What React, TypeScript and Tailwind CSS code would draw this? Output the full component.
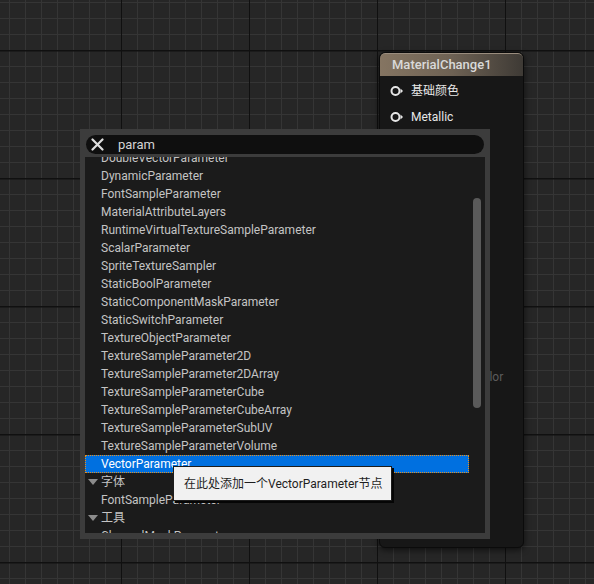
import React from "react";

const items = [
  "DoubleVectorParameter",
  "DynamicParameter",
  "FontSampleParameter",
  "MaterialAttributeLayers",
  "RuntimeVirtualTextureSampleParameter",
  "ScalarParameter",
  "SpriteTextureSampler",
  "StaticBoolParameter",
  "StaticComponentMaskParameter",
  "StaticSwitchParameter",
  "TextureObjectParameter",
  "TextureSampleParameter2D",
  "TextureSampleParameter2DArray",
  "TextureSampleParameterCube",
  "TextureSampleParameterCubeArray",
  "TextureSampleParameterSubUV",
  "TextureSampleParameterVolume",
];

const pins = [
  { label: "基础颜色", on: true },
  { label: "Metallic", on: true },
  { label: "Specular", on: false },
  { label: "Roughness", on: false },
  { label: "Anisotropy", on: false },
  { label: "Emissive", on: false },
  { label: "Opacity", on: false },
  { label: "Opacity Mask", on: false },
  { label: "Normal", on: false },
  { label: "Tangent", on: false },
  { label: "世界位置偏移", on: false },
  { label: "Subsurface Color", on: false },
];

function PinIcon({ on }: { on: boolean }) {
  const c = on ? "#e6e6e6" : "#5a5a5a";
  return (
    <svg width="14" height="12" viewBox="0 0 14 12">
      <circle cx="5.5" cy="6" r="4" fill="none" stroke={c} strokeWidth="2" />
      <polygon points="10.5,3.5 13,6 10.5,8.5" fill={c} />
    </svg>
  );
}

function Arrow() {
  return (
    <svg width="10" height="7" viewBox="0 0 10 7">
      <polygon points="0,0 10,0 5,6" fill="#8c8c8c" />
    </svg>
  );
}

export default function App() {
  return (
    <div className="relative w-[594px] h-[584px] overflow-hidden bg-[#262626] font-['Roboto','Noto_Sans_CJK_SC',sans-serif]">
      <svg className="absolute inset-0" width="594" height="584">
        <defs>
          <pattern id="minor" x="9" y="2" width="16" height="16" patternUnits="userSpaceOnUse">
            <rect x="0" y="0" width="1" height="16" fill="#353535" />
            <rect x="0" y="0" width="16" height="1" fill="#353535" />
          </pattern>
          <pattern id="major" x="121" y="50" width="128" height="128" patternUnits="userSpaceOnUse">
            <rect x="0" y="0" width="1" height="128" fill="#101010" />
            <rect x="0" y="0" width="128" height="1.5" fill="#101010" />
          </pattern>
        </defs>
        <rect width="594" height="584" fill="url(#minor)" />
        <rect width="594" height="584" fill="url(#major)" />
      </svg>

      {/* Material node */}
      <div className="absolute left-[379px] top-[52px] w-[145px] h-[496px] rounded-[6px] bg-[#171717] border border-[#0b0b0b] shadow-[0_2px_6px_rgba(0,0,0,0.6)] overflow-hidden flex flex-col">
        <div className="h-[23px] shrink-0 flex items-center pl-[12px] rounded-t-[5px] bg-[linear-gradient(to_right,#857562,#6e6254_50%,#3e3a35)] border-t border-[#9a8d7e] text-[13px] font-medium text-[#d9d9d9]">
          MaterialChange1
        </div>
        <div className="flex flex-col pt-[2px]">
          {pins.map((p) => (
            <div key={p.label} className="h-[26px] flex items-center pl-[10px] gap-[7px]">
              <PinIcon on={p.on} />
              <span className={p.on ? "text-[12px] text-[#e8e8e8] whitespace-nowrap" : "text-[12px] text-[#5c5c5c] whitespace-nowrap"}>
                {p.label}
              </span>
            </div>
          ))}
        </div>
      </div>

      {/* Context menu */}
      <div className="absolute left-[80px] top-[129px] w-[410px] h-[410px] bg-[#3c3c3c] px-[5px] pt-[6px] pb-[6px] flex flex-col">
        <div className="h-[19px] mx-[1px] rounded-full bg-[#0f0f0f] flex items-center pl-[5px] shrink-0">
          <svg width="13" height="13" viewBox="0 0 13 13">
            <path d="M1.5 1.5 L11.5 11.5 M11.5 1.5 L1.5 11.5" stroke="#dedede" strokeWidth="2.2" strokeLinecap="round" />
          </svg>
          <span className="ml-[14px] text-[13px] text-[#d4d4d4]">param</span>
        </div>
        <div className="mt-[3px] flex-1 bg-[#1b1b1b] flex overflow-hidden">
          <div className="w-[384px] overflow-hidden">
            <div className="mt-[-8px] flex flex-col">
              {items.map((t) => (
                <div key={t} className="h-[18px] flex items-center pl-[16px] text-[12px] text-[#c4c4c4] whitespace-nowrap">
                  {t}
                </div>
              ))}
              <div className="h-[18px] flex items-center pl-[16px] text-[12px] text-white bg-[#0070e0] outline outline-1 outline-dotted outline-[#e8901c] -outline-offset-1">
                VectorParameter
              </div>
              <div className="h-[18px] flex items-center pl-[3px] gap-[3px] text-[12px] text-[#c4c4c4]">
                <Arrow />
                <span>字体</span>
              </div>
              <div className="h-[18px] flex items-center pl-[16px] text-[12px] text-[#c4c4c4]">FontSampleParameter</div>
              <div className="h-[18px] flex items-center pl-[3px] gap-[3px] text-[12px] text-[#c4c4c4]">
                <Arrow />
                <span>工具</span>
              </div>
              <div className="h-[18px] flex items-center pl-[16px] text-[12px] text-[#c4c4c4]">ChannelMaskParameter</div>
            </div>
          </div>
          <div className="w-[16px] flex justify-center">
            <div className="mt-[41px] w-[8px] h-[210px] rounded-full bg-[#5a5a5a]" />
          </div>
        </div>
      </div>

      {/* Tooltip */}
      <div className="absolute left-[173px] top-[466px] w-[219px] h-[35px] bg-[#f1f1f1] border border-[#1c1c1c] shadow-[2px_2px_0_#050505] flex items-center pl-[10px] text-[12px] text-[#1e1e1e] whitespace-nowrap">
        在此处添加一个VectorParameter节点
      </div>
    </div>
  );
}
